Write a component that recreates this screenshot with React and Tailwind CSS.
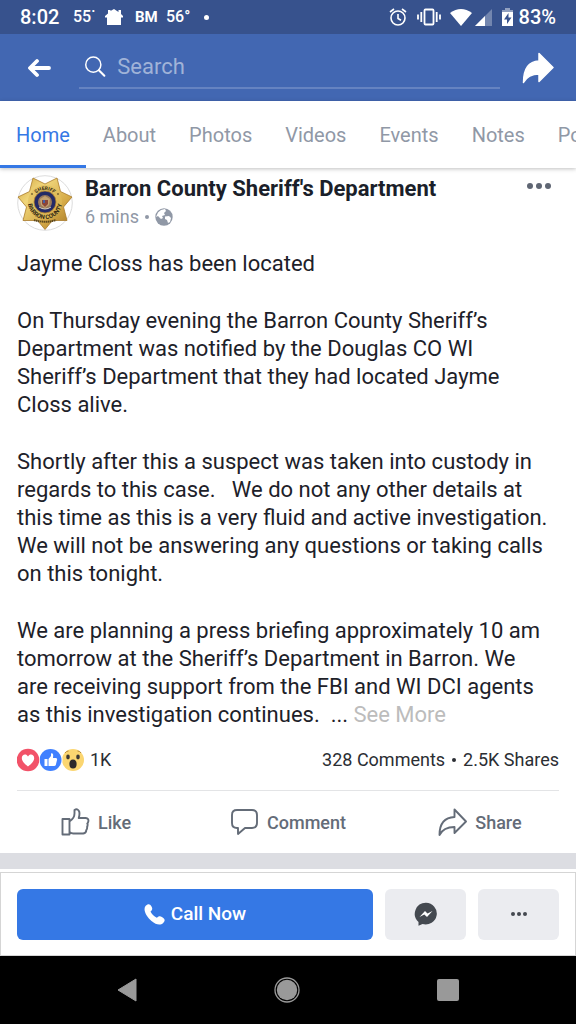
import { useState } from 'react';

const TABS = ['Home', 'About', 'Photos', 'Videos', 'Events', 'Notes', 'Posts'];

const PARAGRAPHS = [
  'Jayme Closs has been located',
  'On Thursday evening the Barron County Sheriff’s Department was notified by the Douglas CO WI Sheriff’s Department that they had located Jayme Closs alive.',
  'Shortly after this a suspect was taken into custody in regards to this case.   We do not any other details at this time as this is a very fluid and active investigation.  We will not be answering any questions or taking calls on this tonight.',
];

const LAST_PARAGRAPH =
  'We are planning a press briefing approximately 10 am tomorrow at the Sheriff’s Department in Barron. We are receiving support from the FBI and WI DCI agents as this investigation continues.  ...';

const SHARE_PATH = 'M17 1.5 31 15.5 17 29.5V22C9 22 4.500 25 1.500 30.500 1.500 17 7 9.500 17 9Z';

function StatusBar() {
  return (
    <div className="flex h-[34px] items-center justify-between bg-[#37528d] px-5 text-white">
      <div className="flex items-center">
        <span className="w-[53px] text-[20px] font-medium">8:02</span>
        <span className="w-8 text-[16px] font-medium">55˙</span>
        <svg className="mr-3 h-4 w-[18px]" viewBox="0 0 18 16" fill="#fff">
          <path d="M3 1h2.500v1L9 0l4.500 3V1H16v4l2 2v1.500h-2V16H2V8.500H0V7l3-2.500Z" />
        </svg>
        <span className="w-[31px] text-[15px] font-bold">BM</span>
        <span className="w-[38px] text-[16px] font-medium">56°</span>
        <span className="h-[5px] w-[5px] rounded-full bg-white" />
      </div>
      <div className="flex items-center">
        <svg className="mr-[10px] h-[18px] w-[18px]" viewBox="0 0 18 18" fill="none" stroke="#fff" strokeWidth="1.600">
          <circle cx="9" cy="10" r="7" />
          <path d="M1 4 5 1M13 1l4 3M9 6v4.500l3 1.800" />
        </svg>
        <svg className="mr-[9px] h-[18px] w-6" viewBox="0 0 24 18" fill="none" stroke="#fff" strokeWidth="1.800">
          <rect x="7.500" y="1.500" width="9" height="15" rx="1" />
          <path d="M1 6.500v5M4.300 4v10M19.700 4v10M23 6.500v5" />
        </svg>
        <svg className="mr-[3px] h-[17px] w-[22px]" viewBox="0 0 22 17" fill="#fff">
          <path d="M0 4Q11-4 22 4L11 17Z" />
        </svg>
        <svg className="mr-[10px] h-[17px] w-[17px]" viewBox="0 0 17 17" fill="#fff">
          <path d="M17 0V17H0Z" fillOpacity=".3" />
          <path d="M10 7v10H0Z" />
        </svg>
        <svg className="mr-[6px] h-[18px] w-[11px]" viewBox="0 0 11 18">
          <path d="M0 2h3V0h5v2h3v3H0Z" fill="#fff" fillOpacity=".45" />
          <path d="M0 4h11v14H0Z" fill="#fff" />
          <path d="M6.500 5 2 11.500h3V16l4.500-6.500H6.500Z" fill="#37528d" />
        </svg>
        <span className="text-[20px] font-medium">83%</span>
      </div>
    </div>
  );
}

function SearchHeader() {
  return (
    <header className="flex h-[67px] items-center bg-[#4267b2] pl-7 pr-[22px]">
      <button type="button" aria-label="Back" className="mr-7 w-[23px]">
        <svg className="h-5 w-[23px]" viewBox="0 0 23 20" fill="none" stroke="#fff" strokeWidth="3.800" strokeLinecap="round" strokeLinejoin="round">
          <path d="M9 3 2 10l7 7M3 10h18" />
        </svg>
      </button>
      <label className="mr-[22px] flex h-[42px] flex-1 items-center border-b-2 border-[#6583c1] pl-[6px]">
        <svg className="mr-[11px] h-[23px] w-[23px]" viewBox="0 0 23 23" fill="none" stroke="#fff" strokeWidth="1.600">
          <circle cx="9" cy="9.500" r="8.200" />
          <path d="m15 15.500 6 6" strokeWidth="2.200" strokeLinecap="round" />
        </svg>
        <input
          type="text"
          aria-label="Search"
          placeholder="Search"
          className="h-8 w-full min-w-0 bg-transparent text-[22px] text-white outline-none placeholder:text-[#a0b3d8]"
        />
      </label>
      <button type="button" aria-label="Share page">
        <svg className="h-8 w-8" viewBox="0 0 32 32" fill="#fff" stroke="#fff" strokeWidth="1.500" strokeLinejoin="round">
          <path d={SHARE_PATH} />
        </svg>
      </button>
    </header>
  );
}

function TabBar({ active, onSelect }) {
  return (
    <nav className="relative z-10 flex h-[67px] gap-px overflow-hidden bg-white shadow-[0_1px_4px_rgba(0,0,0,0.25)]">
      {TABS.map((tab) => (
        <button
          key={tab}
          type="button"
          onClick={() => onSelect(tab)}
          className={`shrink-0 border-b-3 px-4 pt-1 text-[20px] ${
            tab === active ? 'border-[#3578e5] text-[#3578e5]' : 'border-transparent text-[#9098a6]'
          }`}
        >
          {tab}
        </button>
      ))}
    </nav>
  );
}

function SheriffBadge() {
  return (
    <svg className="h-14 w-14 shrink-0" viewBox="-28 -28 56 56" role="img" aria-label="Sheriff badge">
      <defs>
        <linearGradient id="gold" x1="0" y1="0" x2="1" y2="1">
          <stop offset="0" stopColor="#d0a23a" />
          <stop offset=".3" stopColor="#f0d67c" />
          <stop offset=".65" stopColor="#d6ab48" />
          <stop offset="1" stopColor="#a07222" />
        </linearGradient>
        <path id="arcTop" d="M-13 0A13 13 0 0 1 13 0" />
        <path id="arcBottom" d="M-16.500-5A17 17 0 1 0 16.500-5" />
      </defs>
      <circle r="27.300" fill="#fff" stroke="#dcdcdc" />
      <path
        d="M0 26.500-7.400 17.500-22 17.500-18.500 4-27-6-15.500-11.500-12-25 0-19 12-25 15.500-11.500 27-6 18.500 4 22 17.500 7.400 17.500Z"
        fill="url(#gold)"
        stroke="#a97b2b"
        strokeWidth=".8"
        strokeLinejoin="round"
      />
      <circle cy="-1" r="17" fill="#e0bc5a" fillOpacity=".6" />
      <circle cy="-1" r="11" fill="#242a66" stroke="#b68631" strokeWidth=".8" />
      <circle cy="-1" r="7" fill="#9a7a5c" />
      <path d="M-5-4 0-7 5-4 4 2 0 5-4 2Z" fill="#c5a271" />
      <path d="M-3-3h6v4L0 4-3 1Z" fill="#8c4538" />
      <path d="M-2-3h2v3h-2Z" fill="#4660a5" />
      <path d="M-6 4Q0 8 6 4" fill="none" stroke="#d8d0c0" strokeWidth="1" />
      <path d="M-11 17Q0 20.500 11 17" fill="none" stroke="#5c481d" strokeWidth="2" strokeDasharray="1.500 .5" />
      <circle cx="-13" cy="-9" r=".8" fill="#332a15" />
      <circle cx="13" cy="-9" r=".8" fill="#332a15" />
      <text fontSize="5" fontWeight="700" fill="#332a15" textAnchor="middle">
        <textPath href="#arcTop" startOffset="50%">SHERIFF</textPath>
      </text>
      <text fontSize="6" fontWeight="700" fill="#332a15" textAnchor="middle">
        <textPath href="#arcBottom" startOffset="50%">BARRON COUNTY</textPath>
      </text>
    </svg>
  );
}

function Globe() {
  return (
    <svg className="h-[18px] w-[18px]" viewBox="0 0 18 18">
      <circle cx="9" cy="9" r="8.700" fill="#9098a6" />
      <path d="M3 4.500 6 2l4-1 1 2-2 2 1 2-3 1 1 2-2 1-3-3-2 1Z" fill="#fff" />
      <path d="M10 8.500 14 8l2 2-1 4-2 1-1-3-2-1Z" fill="#fff" />
    </svg>
  );
}

function Dots({ className }) {
  return (
    <svg className={className} viewBox="0 0 24 6" fill="currentColor">
      <circle cx="3" cy="3" r="3" />
      <circle cx="12" cy="3" r="3" />
      <circle cx="21" cy="3" r="3" />
    </svg>
  );
}

function Reactions() {
  return (
    <div className="flex items-center">
      <svg className="mr-[5px] h-6 w-[68px]" viewBox="0 0 68 24">
        <circle cx="56" cy="12" r="11" fill="#fbd671" />
        <ellipse cx="51" cy="9" rx="1.800" ry="2.400" fill="#3d3935" />
        <ellipse cx="61" cy="9" rx="1.800" ry="2.400" fill="#3d3935" />
        <path d="M48 5q1.500-2 3.500-2M60.500 3Q63 3 64 5" fill="none" stroke="#b98c3b" strokeWidth="1" />
        <ellipse cx="56" cy="16" rx="3.600" ry="4.500" fill="#2d2a2b" />
        <circle cx="33.500" cy="12" r="12" fill="#fff" />
        <circle cx="33.500" cy="12" r="11" fill="#4080ff" />
        <path d="M27.500 11h3v7h-3ZM31.500 11l2.500-3V5.500q2-.8 2.200 1.500L36 10h3q1.500.3 1 2l-1.200 5q-.3 1-1.800 1h-5.500Z" fill="#fff" />
        <circle cx="11" cy="12" r="12" fill="#fff" />
        <circle cx="11" cy="12" r="11.300" fill="#f25268" />
        <path d="M11 18.500C7 15.500 4.800 13 4.800 10c0-4 4.700-4.700 6.200-1.500C12.500 5.300 17.200 6 17.200 10c0 3-2.200 5.500-6.200 8.500Z" fill="#fff" />
      </svg>
      <span>1K</span>
    </div>
  );
}

function ActionButton({ label, children }) {
  return (
    <button type="button" className="flex items-center justify-center gap-2 text-[18px] font-medium text-[#646c78]">
      <svg className="h-7 w-[29px]" viewBox="0 0 29 28" fill="none" stroke="currentColor" strokeWidth="1.900" strokeLinejoin="round">
        {children}
      </svg>
      {label}
    </button>
  );
}

function Post() {
  return (
    <article className="px-[17px] pt-[7px]">
      <div className="flex items-start">
        <SheriffBadge />
        <div className="ml-3 flex-1">
          <h1 className="text-[22px] leading-[27px] font-bold text-[#1b1f2a]">Barron County Sheriff's Department</h1>
          <p className="flex items-center text-[18px] leading-[30px] text-[#9098a6]">
            6 mins <span className="mx-1.5 h-1 w-1 rounded-full bg-[#9098a6]" />
            <Globe />
          </p>
        </div>
        <button type="button" aria-label="Post options" className="mr-2 pt-2 text-[#5f6673]">
          <Dots className="h-1.5 w-6" />
        </button>
      </div>

      <div className="mt-[18px] flex flex-col gap-[29px] pr-2.5 text-[22px] leading-[28px] whitespace-pre-wrap text-[#1d2129]">
        {PARAGRAPHS.map((text) => (
          <p key={text}>{text}</p>
        ))}
        <p>
          <span>{LAST_PARAGRAPH}</span>{' '}
          <button type="button" className="text-[#bcbcbc]">See More</button>
        </p>
      </div>

      <div className="flex h-[62px] items-center justify-between border-b border-[#e3e4e6] text-[18px] text-[#2b2e33]">
        <Reactions />
        <div className="flex items-center">
          <span>328 Comments</span>
          <span className="mx-[7px] h-1 w-1 rounded-full bg-[#2b2e33]" />
          <span>2.5K Shares</span>
        </div>
      </div>

      <div className="-mx-[17px] grid h-[62px] grid-cols-3">
        <ActionButton label="Like">
          <path d="M1.500 11h7v15.500h-7ZM8.500 13.500c3-2 5-5 5-8V2q3-2 4.700 1.500c.6 2.500.2 4.500-.5 6.500h7q3.300.5 2.600 3.500-.3 1.500-1 2 .8 1.300-.2 3.500.3 1.500-.8 3 0 3-3 3.500h-10q-2 0-3.800-1.500" />
        </ActionButton>
        <ActionButton label="Comment">
          <path d="M7 2h15q5 0 5 5v8q0 5-5 5h-7l-7 6v-6H7q-5 0-5-5V7q0-5 5-5Z" />
        </ActionButton>
        <ActionButton label="Share">
          <path d="M16.500 1.500 28 13.500 16.500 25v-6C9 19 4 22 1.500 27c0-11 5-17.500 15-18Z" />
        </ActionButton>
      </div>
    </article>
  );
}

function PageActions() {
  return (
    <div className="flex h-[84px] items-center gap-3 border border-[#d5d5d5] px-4">
      <button type="button" className="flex h-[51px] flex-1 items-center justify-center gap-[6px] rounded-md bg-[#3578e5] text-[19px] font-medium text-white">
        <svg className="h-[21px] w-[21px]" viewBox="0 0 21 21" fill="#fff">
          <path d="M1.500 2C4-.5 6-.2 7.500 2.500 9 5 8 6 6.500 7.500c1 2.500 3.500 5 6.300 6.300 1.700-1.700 3-2.300 5.500-.6 2.700 1.600 3.200 3.500.9 5.800-2.700 2.500-7 2-11.700-2C3 13-1.500 6.500 1.500 2Z" />
        </svg>
        Call Now
      </button>
      <button type="button" aria-label="Message" className="flex h-[51px] w-[81px] items-center justify-center rounded-md bg-[#ebecf0]">
        <svg className="h-6 w-6" viewBox="0 0 24 24">
          <path d="M12 .8A11.300 10.800 0 1 1 8.500 22L4.500 23.700V20A11 11 0 0 1 12 .8Z" fill="#444950" />
          <path d="m5.500 15 5.500-6 2.500 2.500L18.500 9 13 15l-2.700-2.500Z" fill="#fff" />
        </svg>
      </button>
      <button type="button" aria-label="More actions" className="flex h-[51px] w-[81px] items-center justify-center rounded-md bg-[#ebecf0] text-[#444950]">
        <Dots className="h-1 w-4" />
      </button>
    </div>
  );
}

function NavigationBar() {
  return (
    <div className="flex h-[68px] items-center justify-between bg-black px-[117px]">
      <button type="button" aria-label="Back">
        <svg className="h-6 w-5" viewBox="0 0 20 24" fill="#999" stroke="#999" strokeWidth="1" strokeLinejoin="round">
          <path d="M1 12 19 1v22Z" />
        </svg>
      </button>
      <button type="button" aria-label="Home">
        <svg className="h-[26px] w-[26px]" viewBox="0 0 26 26">
          <circle cx="13" cy="13" r="12" fill="none" stroke="#999" strokeWidth="1.300" />
          <circle cx="13" cy="13" r="10.200" fill="#999" />
        </svg>
      </button>
      <button type="button" aria-label="Recent apps" className="h-[22px] w-[22px] rounded-xs bg-[#999]" />
    </div>
  );
}

export default function App() {
  const [activeTab, setActiveTab] = useState('Home');

  return (
    <div className="flex min-h-screen flex-col bg-white font-['Roboto',sans-serif]">
      <StatusBar />
      <SearchHeader />
      <TabBar active={activeTab} onSelect={setActiveTab} />
      <Post />
      <div className="mb-[3px] h-4 bg-[#dcdde2]" />
      <PageActions />
      <NavigationBar />
    </div>
  );
}
